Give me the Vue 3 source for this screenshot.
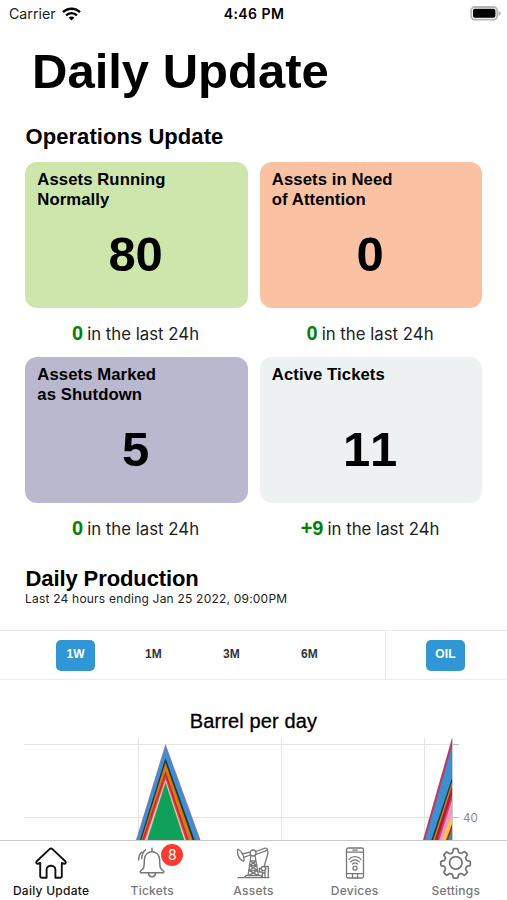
<script setup>
import { ref } from 'vue'

const cards = [
  { title: ['Assets Running', 'Normally'], value: 80, delta: '0', tone: 'green' },
  { title: ['Assets in Need', 'of Attention'], value: 0, delta: '0', tone: 'orange' },
  { title: ['Assets Marked', 'as Shutdown'], value: 5, delta: '0', tone: 'purple' },
  { title: ['Active Tickets'], value: 11, delta: '+9', tone: 'grey' },
]

const ranges = ['1W', '1M', '3M', '6M']
const range = ref('1W')

const tabs = [
  { id: 'home', label: 'Daily Update' },
  { id: 'tickets', label: 'Tickets', badge: 8 },
  { id: 'assets', label: 'Assets' },
  { id: 'devices', label: 'Devices' },
  { id: 'settings', label: 'Settings' },
]
const activeTab = ref('home')

// Stacked areas, outermost first: apex y, left and right x at the chart's bottom edge
const peak = [
  { y: 6, l: 136, r: 200.5, color: '#9a6fa8' },
  { y: 8.5, l: 136.8, r: 199.6, color: '#3f8fce' },
  { y: 20, l: 140, r: 194.6, color: '#1d3540' },
  { y: 24.5, l: 141.3, r: 192.6, color: '#d9780f' },
  { y: 33.5, l: 142.3, r: 188.6, color: '#b5243c' },
  { y: 37, l: 143.4, r: 187.4, color: '#dc3d5c' },
  { y: 41, l: 145, r: 185.8, color: '#f0c39b' },
  { y: 44.5, l: 147.3, r: 184.2, color: '#0fa15c' },
]

// The last day is cut off by the right axis
const edge = [
  { y: 0, l: 423, color: '#b83a62' },
  { y: 8, l: 425, color: '#3f8fce' },
  { y: 40, l: 431.4, color: '#173a42' },
  { y: 44, l: 433.2, color: '#d9860f' },
  { y: 48, l: 434.6, color: '#a81f3c' },
  { y: 57, l: 437.6, color: '#e0415f' },
  { y: 62, l: 439.4, color: '#e79acb' },
  { y: 76, l: 442.2, color: '#fbc63c' },
  { y: 86, l: 446, color: '#b5243c' },
  { y: 91, l: 448, color: '#2f9b86' },
]
</script>

<template>
  <div class="screen">
    <header class="status">
      <div class="status__carrier">
        <span>Carrier</span>
        <svg width="19" height="14" viewBox="0 0 19 14" fill="none" stroke="#000" stroke-width="2.4">
          <path d="M1 5.2C5.7.6 13.3.6 18 5.2" />
          <path d="M4.1 8.3c3-2.9 7.800-2.900 10.800 0" />
          <path d="M9.500 13.500 6.600 10.600c1.600-1.500 4.200-1.500 5.800 0z" fill="#000" stroke="none" />
        </svg>
      </div>
      <div class="status__time">4:46 PM</div>
      <svg class="status__battery" width="31" height="15" viewBox="0 0 31 15">
        <rect x="1.200" y="1" width="26" height="12.600" rx="3.500" fill="#fff" stroke="#b4b4b4" stroke-width="1.800" />
        <rect x="3" y="2.800" width="22.400" height="9" rx="1.800" fill="#000" />
        <path d="M28.600 5v5c1.300-.5 2-1.400 2-2.500s-.7-2-2-2.500z" fill="#aaa" />
      </svg>
    </header>

    <main class="content">
      <h1>Daily Update</h1>
      <h2>Operations Update</h2>
      <section class="cards">
        <div v-for="card in cards" :key="card.tone" class="cell">
          <div class="card" :class="`card--${card.tone}`">
            <div class="card__title">
              <div v-for="line in card.title" :key="line">{{ line }}</div>
            </div>
            <div class="card__value">{{ card.value }}</div>
          </div>
          <p class="cell__delta"><b>{{ card.delta }}</b><span>in the last 24h</span></p>
        </div>
      </section>

      <h2 class="production">Daily Production</h2>
      <p class="ending">Last 24 hours ending Jan 25 2022, 09:00PM</p>

      <div class="filters">
        <div class="filters__ranges">
          <button
            v-for="r in ranges"
            :key="r"
            class="pill"
            :class="{ 'pill--active': r === range }"
            @click="range = r"
          >{{ r }}</button>
        </div>
        <div class="filters__type">
          <button class="pill pill--active">OIL</button>
        </div>
      </div>

      <h3>Barrel per day</h3>
      <svg class="chart" width="507" height="102" viewBox="0 0 507 102">
        <g stroke="#e4e4e4">
          <path d="M24 6.500H452M24 79.500H452M138.500 0V102M281.500 0V102M424.500 0V102" />
          <path d="M452 6.500H459M452 79.500H459" stroke="#bdbdbd" />
        </g>
        <polygon v-for="a in peak" :key="a.y" :points="`${a.l},102 165.500,${a.y} ${a.r},102`" :fill="a.color" />
        <polygon v-for="a in edge" :key="a.y" :points="`${a.l},102 452,${a.y} 452,102`" :fill="a.color" />
        <path d="M452.500 0V102" stroke="#c8c8c8" />
        <text x="463" y="83.500" class="chart__tick">40</text>
      </svg>
    </main>

    <nav class="tabs">
      <button
        v-for="tab in tabs"
        :key="tab.id"
        class="tab"
        :class="{ 'tab--active': tab.id === activeTab }"
        @click="activeTab = tab.id"
      >
        <span class="tab__icon">
          <svg v-if="tab.id === 'home'" width="34" height="34" viewBox="0 0 34 34" stroke-width="1.900">
            <path d="M15.800 2.900 2.500 15.500c-.8 1.200.2 2.500 1.600 2.200L6.200 17v13.300c0 .9.500 1.400 1.400 1.400h5v-8c0-5.200 8.800-5.200 8.800 0v8h5c.9 0 1.400-.5 1.400-1.400V17l2.100.7c1.400.3 2.400-1 1.600-2.200L18.200 2.900q-1.200-1-2.400 0z" />
          </svg>
          <svg v-else-if="tab.id === 'tickets'" width="34" height="34" viewBox="0 0 34 34" stroke-width="1.500">
            <path d="M17 2.200v3.600M6.200 26.700c-1.300 0-1.200-1.500-.3-2 2-1.200 3-2.300 3.100-4.500l.5-7.200C9.900 8.700 12.900 5.800 17 5.800s7.100 2.900 7.500 7.200l.5 7.200c.1 2.200 1.100 3.300 3.100 4.500.9.500 1 2-.3 2z" />
            <path d="M13.500 26.900c.2 5 6.800 5 7 0M6.800 6C4.700 8 3.600 10.700 3.600 14M10.500 3.800C8 6 6.800 9 6.700 12.600M27.200 6c2.100 2 3.200 4.700 3.200 8" />
          </svg>
          <svg v-else-if="tab.id === 'assets'" width="34" height="34" viewBox="0 0 34 34" stroke-width="1.300">
            <path d="M2 31.700h31M8.500 31.500l1.500-2h15l1.500 2M12 29.500l3-20M22.500 29.500l-3.500-20M13.500 19.500h7.300M14.200 14.800h5.600M12.800 24.500h9M14.500 15l6.300 4.500M20 15l-6.500 4.500 8.300 5M20.800 19.500l-8 5 9.500 5M21.800 24.500l-9.500 5" />
            <circle cx="17" cy="7" r="3" />
            <path d="m14 6.200-7.800 1.800M14.500 9l-7 2.300M19.800 5.500 29 2.200q2.300-.3 2.500 2L20 8.500M31.500 4l.5 3-4 14M2.500 3.500q-1-.8-1 1.200c-.2 4.500 2.200 8.500 5.800 10.600l1-1.200C7.800 10 6 5.500 2.500 3.500z" />
            <circle cx="27.500" cy="22.500" r="2.200" />
            <path d="M25.300 22.500h-2v3.500h3v5.500M29.800 20.500h2.500v11M29 25v6.500M26.300 27h3" />
          </svg>
          <svg v-else-if="tab.id === 'devices'" width="34" height="34" viewBox="0 0 34 34" stroke-width="1.300">
            <rect x="8.500" y="2" width="17" height="30" rx="1.800" />
            <path d="M8.500 6.200h17M8.500 27.700h17M14.800 4.100h4.400M14.500 27.700v4.100M19.500 27.700v4.100" />
            <circle cx="17" cy="22.200" r="2" />
            <path d="M11 13.300c3-3.600 9-3.600 12 0M12.800 15.800c2.200-2.600 6.200-2.600 8.400 0M14.600 18c1.300-1.500 3.500-1.500 4.800 0" />
          </svg>
          <!-- eight-toothed gear -->
          <svg v-else width="34" height="34" viewBox="-1.500 -1.500 38 38" stroke-width="2">
            <circle cx="17.300" cy="17.300" r="7" />
            <path d="M15.500 1.500h3q1 0 1.200 1l.4 2.200q.2 1 1 1.300l1.500.6q.8.300 1.600-.2l1.900-1.300q.8-.6 1.500.1l2.200 2.200q.7.700.1 1.500l-1.300 1.900q-.5.800-.2 1.600l.6 1.500q.3.800 1.300 1l2.200.4q1 .2 1 1.200v3q0 1-1 1.200l-2.200.4q-1 .2-1.300 1l-.6 1.500q-.3.800.2 1.600l1.300 1.900q.6.800-.1 1.500l-2.200 2.200q-.7.700-1.500.1l-1.900-1.300q-.8-.5-1.600-.2l-1.500.6q-.8.300-1 1.300l-.4 2.200q-.2 1-1.200 1h-3q-1 0-1.200-1l-.4-2.200q-.2-1-1-1.300l-1.500-.6q-.8-.3-1.600.2l-1.900 1.300q-.8.600-1.500-.1l-2.200-2.200q-.7-.7-.1-1.500l1.300-1.900q.5-.8.200-1.600l-.6-1.500q-.3-.8-1.300-1l-2.200-.4q-1-.2-1-1.200v-3q0-1 1-1.200l2.200-.4q1-.2 1.300-1l.6-1.500q.3-.8-.2-1.600L4.100 9.300q-.6-.8.1-1.500l2.200-2.200q.7-.7 1.500-.1l1.900 1.300q.8.500 1.600.2l1.500-.6q.8-.3 1-1.300l.4-2.400q.2-1.200 1.200-1.200z" />
          </svg>
          <i v-if="tab.badge" class="tab__badge">{{ tab.badge }}</i>
        </span>
        <span class="tab__label">{{ tab.label }}</span>
      </button>
    </nav>
  </div>
</template>

<style>
body {
  margin: 0;
  background: #fff;
}
</style>

<style scoped>
.screen {
  display: flex;
  flex-direction: column;
  width: 507px;
  height: 900px;
  overflow: hidden;
  background: #fff;
  color: #000;
  font-family: "Liberation Sans", Arial, sans-serif;
}

h1,
h2,
h3,
p {
  margin: 0;
}

button {
  padding: 0;
  border: 0;
  background: none;
  font: inherit;
}

.status {
  display: grid;
  grid-template-columns: 1fr auto 1fr;
  align-items: center;
  flex: none;
  height: 27px;
  padding: 0 6px 0 9px;
  font-family: Inter, sans-serif;
  font-size: 14px;
}

.status__carrier {
  display: flex;
  align-items: center;
  gap: 6px;
  font-size: 14.200px;
  color: #222;
}

.status__time {
  margin-right: 2px;
  font-weight: 600;
  letter-spacing: 0.450px;
}

.status__battery {
  justify-self: end;
}

.content {
  flex: 1;
  min-height: 0;
  overflow: hidden;
}

h1 {
  padding: 16px 0 0 32px;
  font-size: 49px;
  line-height: 56px;
}

h2 {
  padding: 26px 0 0 25.500px;
  font-size: 22px;
  line-height: 24px;
  letter-spacing: 0.060px;
}

.cards {
  display: grid;
  grid-template-columns: 222.500px 222.500px;
  column-gap: 12px;
  padding: 13px 25px 0 25.300px;
}

.cell {
  height: 195.300px;
}

.card {
  box-sizing: border-box;
  height: 146px;
  padding: 8px 12px;
  border-radius: 12px;
}

.card--green {
  background: #cde6ac;
}

.card--orange {
  background: #fac2a2;
}

.card--purple {
  background: #b9b8cf;
}

.card--grey {
  background: #edf1f2;
}

.card__title {
  height: 40px;
  font-size: 16.700px;
  font-weight: 700;
  line-height: 20px;
  letter-spacing: 0.080px;
}

.card__value {
  padding: 16px 2px 0 0;
  font-size: 49px;
  font-weight: 700;
  font-kerning: none;
  line-height: 56px;
  letter-spacing: -0.300px;
  text-align: center;
}

.cell__delta {
  display: flex;
  align-items: baseline;
  justify-content: center;
  gap: 4px;
  padding: 13px 2px 0 0;
  font-family: Inter, sans-serif;
  font-size: 16.800px;
  line-height: 24px;
  color: #222;
}

.cell__delta b {
  font-family: "Liberation Sans", Arial, sans-serif;
  font-size: 20px;
  color: #078007;
}

h2.production {
  padding-top: 14.400px;
  letter-spacing: -0.100px;
}

.ending {
  padding: 0 0 0 25px;
  font-family: Inter, sans-serif;
  font-size: 12px;
  line-height: 16px;
  letter-spacing: 0.210px;
  color: #222;
}

.filters {
  display: flex;
  box-sizing: border-box;
  height: 50px;
  margin-top: 23px;
  border-top: 1px solid #e6e9ea;
  border-bottom: 1px solid #ececec;
}

.filters__ranges {
  display: flex;
  gap: 39px;
  box-sizing: border-box;
  width: 386px;
  padding: 9px 0 0 56px;
  border-right: 1px solid #e6e6e6;
}

.filters__type {
  padding: 9px 0 0 40px;
}

.pill {
  display: block;
  width: 39px;
  height: 31px;
  padding-bottom: 2px;
  border-radius: 5px;
  font-size: 12px;
  font-weight: 700;
  letter-spacing: 0.100px;
  color: #333;
}

.pill--active {
  background: #3096d5;
  color: #fff;
}

h3 {
  padding-top: 29px;
  font-size: 20px;
  font-weight: 400;
  line-height: 24px;
  letter-spacing: 0.130px;
  text-align: center;
  -webkit-text-stroke: 0.300px #000;
}

.chart {
  display: block;
  margin-top: 5px;
}

.chart__tick {
  font-family: Inter, sans-serif;
  font-size: 11.500px;
  fill: #888;
}

.tabs {
  display: grid;
  grid-template-columns: repeat(5, 101.200px);
  flex: none;
  box-sizing: border-box;
  height: 60px;
  padding-left: 0.500px;
  border-top: 1px solid #c9c9c9;
  background: #fff;
}

.tab {
  display: flex;
  flex-direction: column;
  align-items: center;
  padding-top: 5px;
  color: #777;
}

.tab__icon {
  position: relative;
  height: 34px;
}

.tab__icon svg {
  display: block;
  fill: none;
  stroke: currentColor;
  stroke-linecap: round;
  stroke-linejoin: round;
}

.tab__badge {
  position: absolute;
  top: -2px;
  left: 26px;
  width: 22px;
  height: 22px;
  border-radius: 50%;
  background: #fb3b30;
  color: #fff;
  font: 400 14px/22px Inter, sans-serif;
  text-align: center;
}

.tab__label {
  margin-top: 3px;
  font-family: Inter, sans-serif;
  font-size: 12px;
  font-weight: 500;
  line-height: 15px;
  letter-spacing: 0.250px;
  white-space: nowrap;
}

.tab--active {
  color: #111;
}
</style>
